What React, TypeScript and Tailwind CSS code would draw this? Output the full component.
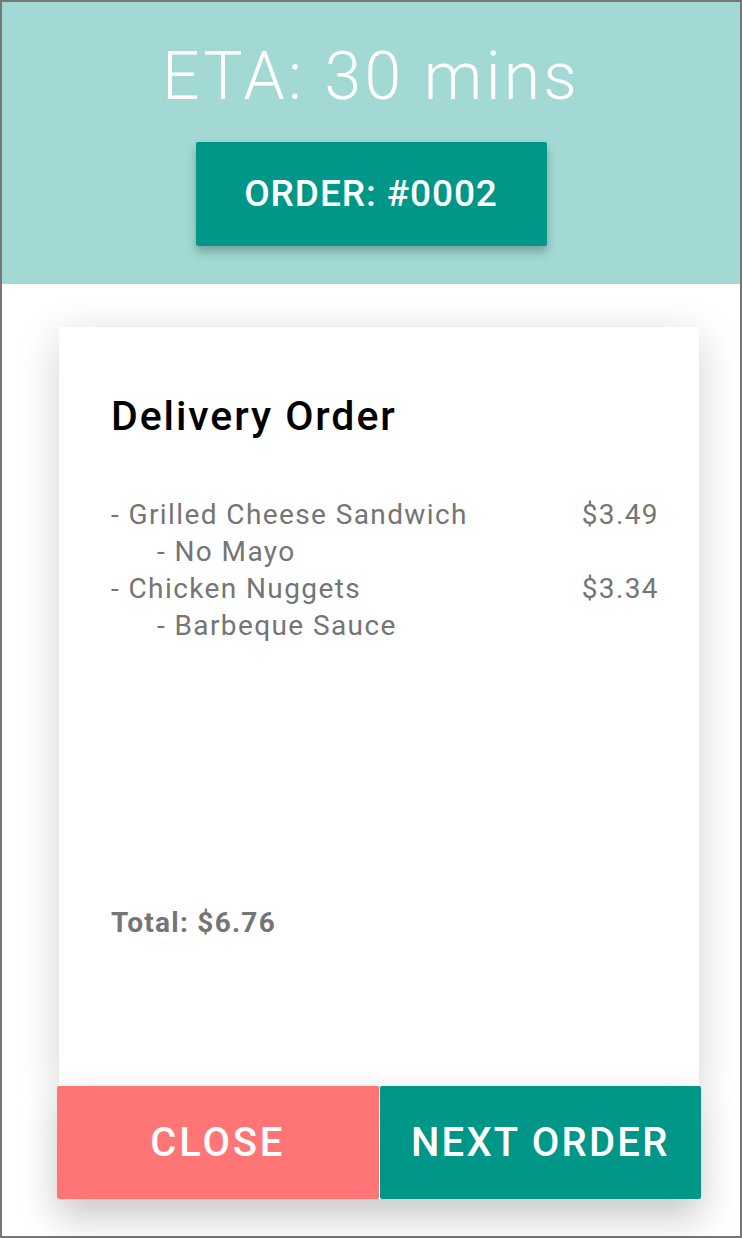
const items = [
  { name: "Grilled Cheese Sandwich", price: "$3.49", note: "No Mayo" },
  { name: "Chicken Nuggets", price: "$3.34", note: "Barbeque Sauce" },
];

export default function App() {
  return (
    <div className="h-[1238px] w-[742px] border-2 border-[#777777] bg-white font-['Roboto',sans-serif]">
      <header className="flex h-[282px] flex-col items-center bg-[#a2d9d4] pt-[42px]">
        <h1 className="text-[66px] font-light leading-none tracking-wider text-white">ETA: 30 mins</h1>
        <button
          type="button"
          className="mt-[32px] flex h-[104px] w-[351px] items-center justify-center rounded-[2px] bg-[#009688] text-[37px] font-medium tracking-wide text-white shadow-[0_6px_10px_rgba(0,0,0,0.25)]"
        >
          ORDER: #0002
        </button>
      </header>

      <div className="ml-[55px] mt-[43px] w-[644px]">
        <article className="mx-[2px] flex h-[759px] flex-col bg-white pl-[52px] pr-[40px] pt-[69px] shadow-[0_10px_40px_rgba(0,0,0,0.18)]">
          <h2 className="text-[41px] font-medium leading-none tracking-[0.047em] text-black">Delivery Order</h2>
          <ul className="mt-[59px] text-[28px] leading-[37px] tracking-wider text-[#757575]">
            {items.map((item) => (
              <li key={item.name}>
                <div className="flex justify-between">
                  <span>- {item.name}</span>
                  <span>{item.price}</span>
                </div>
                <div className="pl-[46px]">- {item.note}</div>
              </li>
            ))}
          </ul>
          <p className="mt-[260px] text-[28px] font-bold leading-[37px] tracking-[0.045em] text-[#757575]">Total: $6.76</p>
        </article>
        <div className="relative flex h-[113px] gap-px shadow-[0_18px_36px_rgba(0,0,0,0.22)]">
          <button
            type="button"
            className="flex-1 rounded-[2px] bg-[#ff7474] text-[40px] font-medium tracking-[0.07em] text-white"
          >
            CLOSE
          </button>
          <button
            type="button"
            className="flex-1 rounded-[2px] bg-[#009688] text-[40px] font-medium tracking-[0.056em] text-white"
          >
            NEXT ORDER
          </button>
        </div>
      </div>
    </div>
  );
}
